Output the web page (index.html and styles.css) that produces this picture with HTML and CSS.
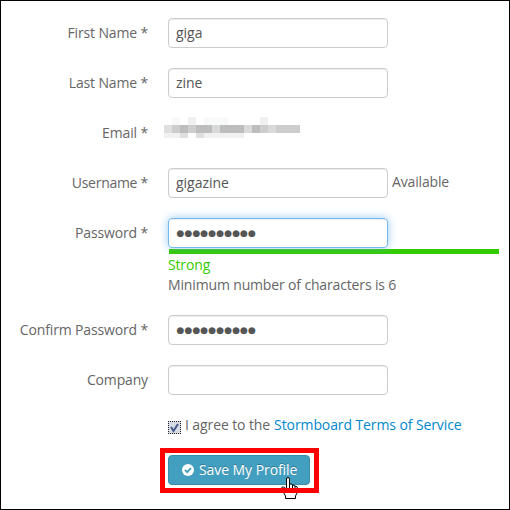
FILE: index.html
```html
<!DOCTYPE html>
<html lang="en">
<head>
<meta charset="utf-8">
<title>Profile</title>
<link rel="stylesheet" href="styles.css">
</head>
<body>
<form class="profile">
  <div class="row"><label class="label">First Name *</label><div class="field">giga</div></div>
  <div class="row"><label class="label">Last Name *</label><div class="field">zine</div></div>
  <div class="row"><label class="label">Email *</label>
    <svg class="mosaic" width="136" height="24" viewBox="0 0 136 24" shape-rendering="crispEdges">
      <path fill="#f8f9f9" d="M8 0h8v8H8zM40 0h24v8H40z"/><path fill="#f1f1f1" d="M24 0h8v8h-8zM96 0h8v8h-8zM0 16h16v5H0zM40 16h40v5H40z"/>
      <path fill="#dfdfdf" d="M0 8h8v8H0zM16 16h8v5h-8zM32 16h8v5h-8z"/>
      <path fill="#cdcdcd" d="M8 8h8v8H8zM24 8h8v8h-8zM96 8h8v8h-8zM112 8h24v8h-24z"/>
      <path fill="#bdbdbd" d="M16 8h8v8h-8zM32 8h16v8H32zM56 8h24v8H56zM88 8h8v8h-8z"/>
      <path fill="#d9d9d9" d="M48 8h8v8h-8zM80 8h8v8h-8zM104 8h8v8h-8z"/>
    </svg></div>
  <div class="row"><label class="label username">Username *</label><div class="field">gigazine</div><span class="available">Available</span></div>
  <div class="row password"><label class="label">Password *</label><div class="field focus"><span class="dots">●●●●●●●●●●</span></div></div>
  <div class="strength">
    <div class="bar"></div>
    <div class="line strong">Strong</div>
    <div class="line">Minimum number of characters is 6</div>
  </div>
  <div class="row"><label class="label">Confirm Password *</label><div class="field"><span class="dots">●●●●●●●●●●</span></div></div>
  <div class="row"><label class="label">Company</label><div class="field"></div></div>
  <div class="agree">
    <svg class="check" width="13" height="13" viewBox="0 0 13 13"><path fill="#d7dbe3" d="M0 0h13v13H0z"/><path fill="none" stroke="#222" stroke-dasharray="1 1" d="M0 .5h13M0 12.500h13M.5 0v13M12.500 0v13"/><path fill="none" stroke="#465588" stroke-width="2" d="M3 6l2.500 4L10 3"/></svg>
    <span>I agree to the</span><a>Stormboard Terms of Service</a>
  </div>
  <div class="highlight">
    <div class="button">
      <svg width="12" height="12" viewBox="0 0 12 12"><circle cx="6" cy="6" r="6" fill="#fff"/><path d="M3 5.800l2.200 2.300L9 4.200" fill="none" stroke="#439fbf" stroke-width="1.900"/></svg>
      <span>Save My Profile</span>
    </div>
    <svg class="cursor" width="17" height="22" viewBox="0 0 17 22"><path fill="#fff" stroke="#000" d="M5.500 12V2q0-1.500 1.500-1.500T8.500 2v5q3-.5 3 1.200 2-.7 2.500 1 2.500-.2 2.500 2V15l-2 4v2.500h-10V19l-3-5.500-1-2q0-2 2-1.500z"/><path stroke="#000" d="M8.500 7v4M11.500 8v3M14 9v3"/></svg>
  </div>
</form>
</body>
</html>
```
FILE: styles.css
```css
* { box-sizing: border-box; }
body { margin: 0; background: #fff; color: #666; font: 14px/20px "Open Sans", "Noto Sans", sans-serif; letter-spacing: -.15px; white-space: nowrap; }
.profile { width: 510px; height: 510px; border: 1px solid #000; padding-top: 17px; overflow: hidden; }
.row { display: flex; height: 30px; margin-bottom: 20px; }
.label { width: 147px; margin-right: 20px; padding-top: 5px; text-align: right; }
.username { letter-spacing: -.28px; }
.field { width: 220px; height: 30px; padding: 4px 7px; border: 1px solid #ccc; border-radius: 4px; box-shadow: inset 0 1px 1px rgba(0,0,0,.075); color: #555; letter-spacing: -.03px; }
.focus { border-color: #74b8ef; box-shadow: inset 0 1px 1px rgba(0,0,0,.075), 0 0 8px rgba(82,168,236,.6); }
.mosaic { margin: -1px 0 0 -4px; }
.available { margin: 4px 0 0 4px; }
.dots { display: block; margin-top: -1px; padding-left: .5px; font: 9px/22px "DejaVu Sans", sans-serif; letter-spacing: .1px; }
.password { margin-bottom: 0; }
.strength { margin-left: 168px; height: 67px; padding-top: 1px; }
.bar { width: 330px; height: 5px; margin-bottom: 1px; background: #3c0; }
.line { margin-left: -1px; height: 20px; }
.strong { color: #3c0; }
.agree { display: flex; height: 20px; margin-left: 167px; letter-spacing: -.1px; }
.agree a { color: #0088cc; margin-left: 4px; }
.check { margin: 6px 4px 0 0; }
.highlight { position: relative; width: 159px; height: 45px; margin: 13px 0 0 159px; padding: 7px 8px; }
.highlight::after { content: ""; position: absolute; inset: 0; border: 5px solid #f00; }
.button { display: flex; align-items: center; gap: 5px; width: 142px; height: 30px; padding-left: 13px; border: 1px solid #398ba8; border-radius: 4px; background: #439fbf; color: #fff; letter-spacing: -.07px; text-shadow: 0 -1px 0 rgba(0,0,0,.25); }
.cursor { position: absolute; left: 121px; top: 29px; }
```
